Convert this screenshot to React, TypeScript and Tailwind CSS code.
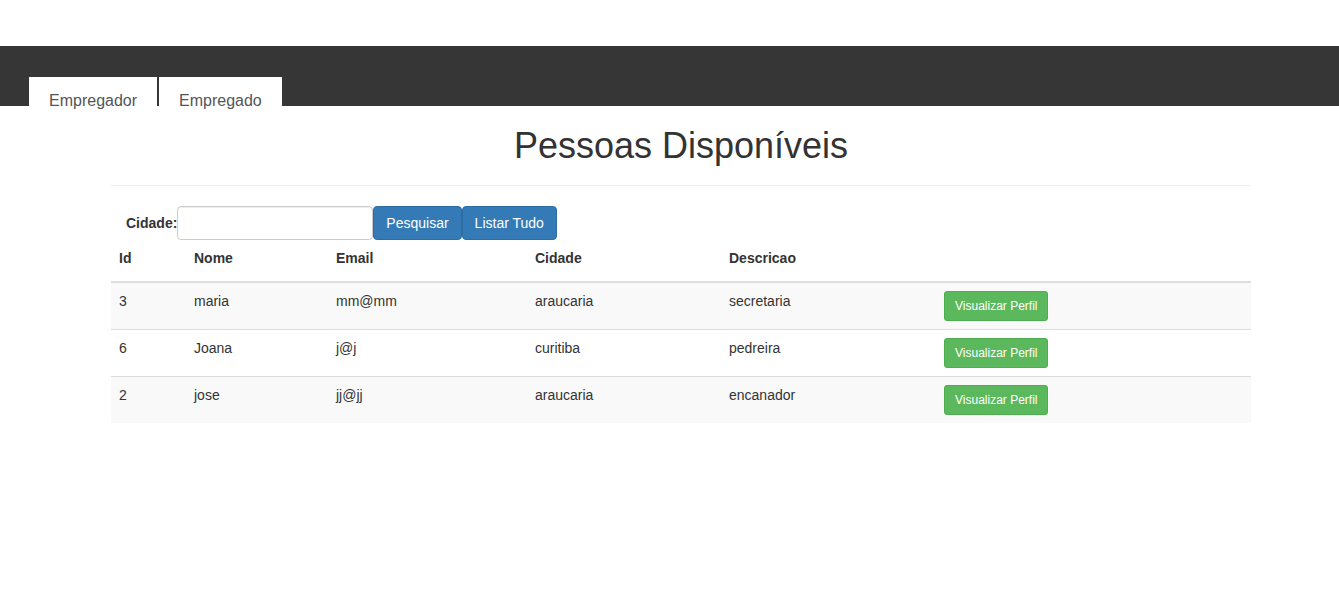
import React from 'react';

type Pessoa = {
  id: number;
  nome: string;
  email: string;
  cidade: string;
  descricao: string;
};

const pessoas: Pessoa[] = [
  { id: 3, nome: 'maria', email: 'mm@mm', cidade: 'araucaria', descricao: 'secretaria' },
  { id: 6, nome: 'Joana', email: 'j@j', cidade: 'curitiba', descricao: 'pedreira' },
  { id: 2, nome: 'jose', email: 'jj@jj', cidade: 'araucaria', descricao: 'encanador' },
];

export default function App() {
  return (
    <div className="h-[600px] overflow-hidden bg-white pt-[46px] text-[14px] text-[#333] font-['Liberation_Sans',Arial,sans-serif]">
      {/* Top bar with tabs */}
      <div className="h-[60px] bg-[#363636] flex items-end pl-[29px] gap-[2px]">
        <div className="h-[29px] bg-white px-[20px] pt-[13px] text-[16px] leading-[22px] text-[#555] whitespace-nowrap">
          Empregador
        </div>
        <div className="h-[29px] bg-white px-[20px] pt-[13px] text-[16px] leading-[22px] text-[#555] whitespace-nowrap">
          Empregado
        </div>
      </div>

      <div className="ml-[111px] w-[1140px]">
        <h1 className="mt-[20px] mb-[10px] text-center text-[36px] leading-[40px] font-normal text-[#333]">
          Pessoas Disponíveis
        </h1>
        <hr className="mt-[19px] mb-[20px] border-t border-[#eee]" />

        {/* Search form */}
        <div className="flex items-center pl-[15px]">
          <label className="font-bold text-[14px] leading-[20px]">Cidade:</label>
          <input
            type="text"
            className="h-[34px] w-[196px] rounded-[4px] border border-[#ccc] px-3 shadow-[inset_0_1px_1px_rgba(0,0,0,0.075)] outline-none"
          />
          <button className="h-[34px] rounded-[4px] border border-[#2e6da4] bg-[#337ab7] px-[12px] text-[14px] text-white">
            Pesquisar
          </button>
          <button className="h-[34px] rounded-[4px] border border-[#2e6da4] bg-[#337ab7] px-[12px] text-[14px] text-white">
            Listar Tudo
          </button>
        </div>

        {/* Table */}
        <table className="w-full border-collapse text-left leading-[20px]">
          <colgroup>
            <col className="w-[75px]" />
            <col className="w-[142px]" />
            <col className="w-[199px]" />
            <col className="w-[194px]" />
            <col className="w-[215px]" />
            <col />
          </colgroup>
          <thead>
            <tr className="border-b-2 border-[#ddd]">
              <th className="px-[8px] pt-[8px] pb-[13px] font-bold">Id</th>
              <th className="px-[8px] pt-[8px] pb-[13px] font-bold">Nome</th>
              <th className="px-[8px] pt-[8px] pb-[13px] font-bold">Email</th>
              <th className="px-[8px] pt-[8px] pb-[13px] font-bold">Cidade</th>
              <th className="px-[8px] pt-[8px] pb-[13px] font-bold">Descricao</th>
              <th className="px-[8px] pt-[8px] pb-[13px]"></th>
            </tr>
          </thead>
          <tbody>
            {pessoas.map((p, idx) => (
              <tr
                key={p.id}
                className={`${idx % 2 === 0 ? 'bg-[#f9f9f9]' : 'bg-white'} ${idx > 0 ? 'border-t border-[#ddd]' : ''}`}
              >
                <td className="p-[8px] align-top">{p.id}</td>
                <td className="p-[8px] align-top">{p.nome}</td>
                <td className="p-[8px] align-top">{p.email}</td>
                <td className="p-[8px] align-top">{p.cidade}</td>
                <td className="p-[8px] align-top">{p.descricao}</td>
                <td className="p-[8px] align-top">
                  <button className="h-[30px] rounded-[3px] border border-[#4cae4c] bg-[#5cb85c] px-[10px] text-[12px] leading-[18px] text-white">
                    Visualizar Perfil
                  </button>
                </td>
              </tr>
            ))}
          </tbody>
        </table>
      </div>
    </div>
  );
}
